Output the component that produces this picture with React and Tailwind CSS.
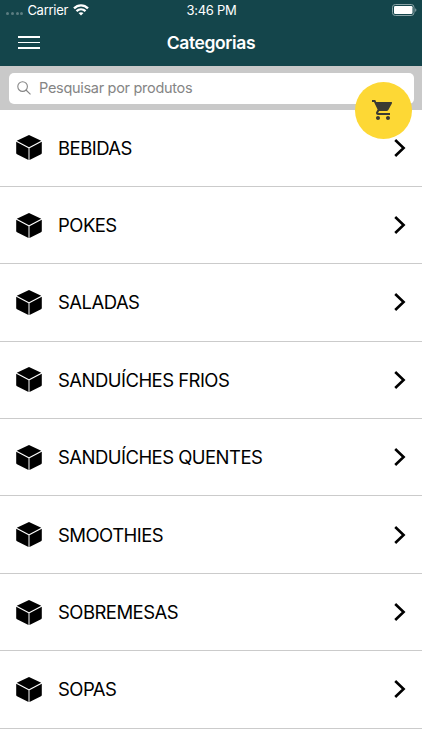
import { MdShoppingCart } from 'react-icons/md'

const categories = [
  'BEBIDAS',
  'POKES',
  'SALADAS',
  'SANDUÍCHES FRIOS',
  'SANDUÍCHES QUENTES',
  'SMOOTHIES',
  'SOBREMESAS',
  'SOPAS',
]

function WifiIcon() {
  return (
    <svg width="16" height="12" viewBox="0 0 16 12" fill="none" stroke="#fff" strokeWidth="2.3">
      <path d="M1 4.4C5 .4 11 .4 15 4.4" />
      <path d="M3.5 7.2c2.6-2.4 6.4-2.4 9 0" />
      <path d="M8 11.6 5.5 9.1c1.4-1.2 3.6-1.2 5 0z" fill="#fff" stroke="none" />
    </svg>
  )
}

function BatteryIcon() {
  return (
    <svg width="25" height="12" viewBox="0 0 25 12">
      <rect x="0.5" y="0.5" width="21.5" height="11" rx="2.8" fill="none" stroke="#8aa3a7" />
      <rect x="2" y="2" width="18.5" height="8" rx="1.3" fill="#fff" />
      <path d="M23.2 4.2c1.6.5 1.6 3.1 0 3.6z" fill="#8aa3a7" />
    </svg>
  )
}

function CubeIcon() {
  return (
    <svg width="26" height="25" viewBox="0 0 26 25">
      <path d="M13 0 25.2 5.8 13 12.2.8 5.8z" />
      <path d="M.2 6.8 12.5 13.2V25L1 19.2q-.8-.4-.8-1.2z" />
      <path d="M25.8 6.8 13.5 13.2V25L25 19.2q.8-.4.8-1.2z" />
    </svg>
  )
}

function Row({ name }) {
  return (
    <li className="flex h-[77.4px] items-center border-b border-[#cbcbcb] px-4">
      <CubeIcon />
      <span className="ml-4 flex-1 text-[18.5px] leading-6 tracking-[-0.54px] text-black">{name}</span>
      <svg width="12" height="18" viewBox="0 0 12 18" fill="none" stroke="#000" strokeWidth="2.6">
        <path d="m1.2 1 8.4 8-8.4 8" />
      </svg>
    </li>
  )
}

export default function App() {
  return (
    <div className="relative h-[750px] w-[422px] overflow-hidden bg-white font-['Inter',sans-serif]">
      <header className="h-[65.5px] bg-[#14454b] text-white">
        <div className="grid h-5 grid-cols-3 items-center pl-1.5 pr-[5px] text-[13px] leading-5">
          <div className="flex items-center">
            <div className="mt-[7px] flex gap-[1.8px]">
              {[0, 1, 2, 3].map(i => (
                <i key={i} className="size-[3px] rounded-full bg-[#5c7d81]" />
              ))}
            </div>
            <span className="ml-1 mr-[5px] tracking-[-0.28px]">Carrier</span>
            <WifiIcon />
          </div>
          <span className="text-center tracking-[-0.25px]">3:46 PM</span>
          <div className="flex justify-end">
            <BatteryIcon />
          </div>
        </div>
        <div className="grid h-[45px] grid-cols-[1fr_auto_1fr] items-center px-[18px]">
          <button aria-label="Menu" className="flex w-[21.5px] flex-col gap-[3.5px]">
            <span className="h-[1.8px] bg-white" />
            <span className="h-[1.8px] bg-white" />
            <span className="h-[1.8px] bg-white" />
          </button>
          <h1 className="text-[17.5px] font-semibold leading-6 tracking-[-0.4px]">Categorias</h1>
        </div>
      </header>

      <div className="h-[44.5px] bg-[#c9c9c9] px-[8.5px] pt-[7px]">
        <div className="flex h-[31px] items-center rounded-[5px] bg-white pl-2">
          <svg width="14" height="14" viewBox="0 0 14 14" fill="none" stroke="#858585" strokeWidth="1.1">
            <circle cx="5.6" cy="5.6" r="4.8" />
            <path d="m9 9 4.5 4.3" />
          </svg>
          <span className="ml-[8.5px] text-[14.5px] leading-5 tracking-[-0.3px] text-[#858585]">Pesquisar por produtos</span>
        </div>
      </div>

      <ul className="-mt-[0.5px]">
        {categories.map(name => <Row key={name} name={name} />)}
      </ul>

      <button aria-label="Carrinho" className="absolute left-[354.5px] top-[81.5px] flex size-[57px] items-center justify-center rounded-full bg-[#fdd835]">
        <MdShoppingCart size={24} color="#3b3a33" />
      </button>
    </div>
  )
}
